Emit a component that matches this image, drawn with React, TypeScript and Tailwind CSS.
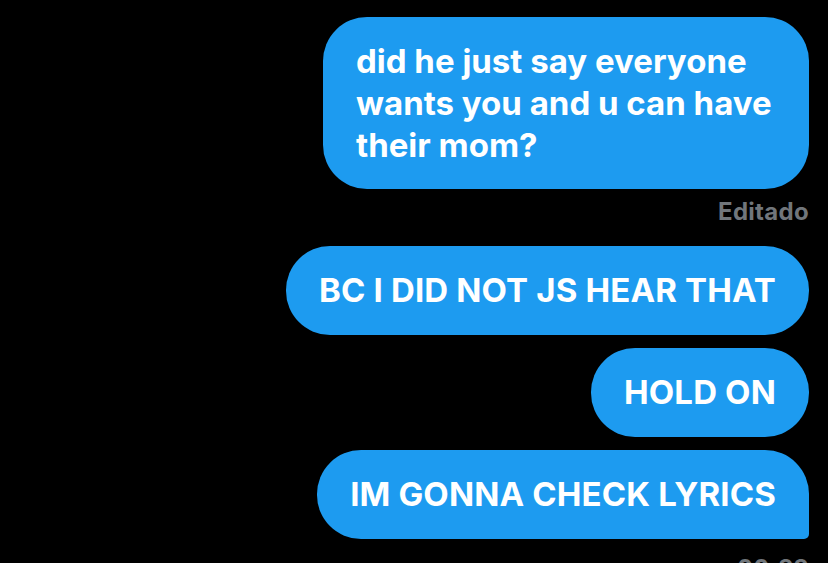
const FONT = "font-['Inter','Noto_Sans',sans-serif]";

function Bubble({
  children,
  last = false,
}: {
  children: React.ReactNode;
  last?: boolean;
}) {
  return (
    <div
      className={`flex h-[89px] items-center bg-[#1d9bf0] px-[33px] text-[33px] leading-[43px] font-bold tracking-[0.15px] text-white ${
        last ? "rounded-[44px] rounded-br-[5px]" : "rounded-[44px]"
      }`}
    >
      {children}
    </div>
  );
}

export default function App() {
  return (
    <div
      className={`flex h-[563px] w-[828px] flex-col items-end overflow-hidden bg-black pt-[17px] pr-[19px] ${FONT}`}
    >
      <div className="w-[486px] rounded-[44px] bg-[#1d9bf0] px-[33px] py-[23px] text-[33px] leading-[42px] font-bold text-white">
        did he just say everyone
        <br />
        wants you and u can have
        <br />
        their mom?
      </div>
      <div className="mt-[10px] mb-[21px] text-[24px] leading-[26px] font-bold tracking-[0.3px] text-[#71767b]">
        Editado
      </div>

      <div className="flex flex-col items-end gap-[13px]">
        <Bubble>BC I DID NOT JS HEAR THAT</Bubble>
        <Bubble>HOLD ON</Bubble>
        <Bubble last>IM GONNA CHECK LYRICS</Bubble>
      </div>

      <div className="mt-[17px] text-[24px] leading-[26px] font-bold tracking-[0.3px] text-[#71767b]">
        00:22
      </div>
    </div>
  );
}
